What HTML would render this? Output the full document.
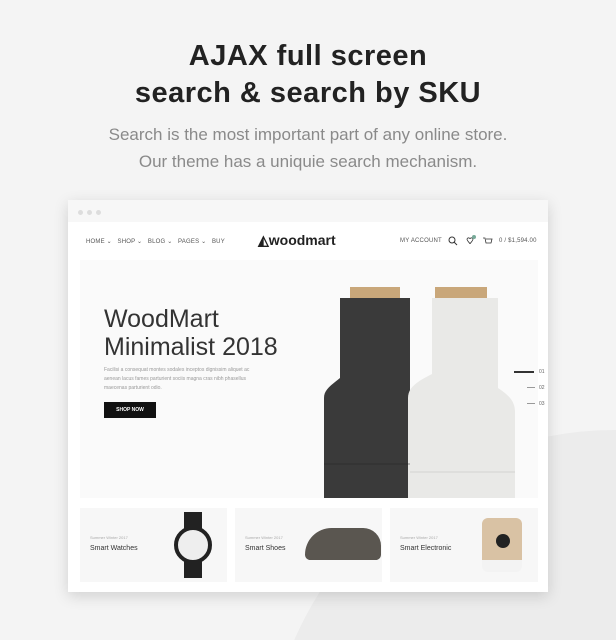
<!DOCTYPE html>
<html><head><style>
*{margin:0;padding:0;box-sizing:border-box}
html,body{width:616px;height:640px;overflow:hidden}
body{background:#f4f4f4;font-family:"Liberation Sans",sans-serif;position:relative}
.circ{position:absolute;left:265px;top:430px;width:700px;height:700px;border-radius:50%;background:#ececec}
h1{position:absolute;top:38px;left:0;width:616px;text-align:center;font-size:29px;line-height:37px;color:#222;font-weight:bold;letter-spacing:0.5px}
.sub{position:absolute;top:121px;left:0;width:616px;text-align:center;font-size:17px;line-height:27px;color:#8a8a8a}
.win{position:absolute;left:68px;top:200px;width:480px;height:392px;background:#fff;box-shadow:0 4px 14px rgba(0,0,0,.15)}
.bar{height:22px;background:#f7f7f7}
.dot{position:absolute;top:10px;width:5px;height:5px;border-radius:50%;background:#ddd}
.nav{position:absolute;top:38px;font-size:6px;color:#555;letter-spacing:.2px}
.logo{position:absolute;left:190px;top:32px;font-size:14px;font-weight:bold;color:#222}
.hero{position:absolute;left:12px;top:60px;width:458px;height:238px;background:#fafafa;overflow:hidden}
.ht{position:absolute;left:24px;top:45px;font-size:25px;line-height:28px;color:#333;font-weight:300}
.hp{position:absolute;left:24px;top:106px;font-size:5px;line-height:9px;color:#999;width:160px}
.btn{position:absolute;left:24px;top:142px;width:52px;height:16px;background:#111;color:#fff;font-size:5px;font-weight:bold;text-align:center;line-height:16px}
.card{position:absolute;top:308px;height:74px;background:#f7f7f7}
.cs{position:absolute;left:10px;top:27px;font-size:4px;color:#aaa}
.cn{position:absolute;left:10px;top:37px;font-size:7px;color:#333}
.sl{position:absolute;font-size:5px;color:#666}
</style></head><body>
<div class="circ"></div>
<h1>AJAX full screen<br>search &amp; search by SKU</h1>
<div class="sub">Search is the most important part of any online store.<br>Our theme has a uniquie search mechanism.</div>
<div class="win">
<div class="bar"></div>
<div class="dot" style="left:10px"></div><div class="dot" style="left:19px"></div><div class="dot" style="left:28px"></div>
<div class="nav" style="left:18px">HOME ⌄ &nbsp; SHOP ⌄ &nbsp; BLOG ⌄ &nbsp; PAGES ⌄ &nbsp; BUY</div>
<div class="logo">◭woodmart</div>
<div class="nav" style="left:332px">MY ACCOUNT</div>
<svg style="position:absolute;left:380px;top:35px" width="60" height="12"><circle cx="4" cy="5" r="3" fill="none" stroke="#333" stroke-width="1"/><line x1="6" y1="7" x2="9" y2="10" stroke="#333"/><path d="M19 4c1-2 3-1 3 0c0-1 2-2 3 0c0 2-3 4-3 5c0-1-3-3-3-5z" fill="none" stroke="#333" stroke-width=".8"/><circle cx="26" cy="2" r="2" fill="#7a9"/><path d="M35 3h2l1 5h5l1-4h-6" fill="none" stroke="#333" stroke-width=".8"/></svg>
<div class="nav" style="left:431px">0 / $1,594.00</div>
<div class="hero">
<div class="ht">WoodMart<br>Minimalist 2018</div>
<div class="hp">Facilisi a consequat montes sodales inceptos dignissim aliquet ac aenean lacus fames parturient sociis magna cras nibh phasellus maecenas parturient odio.</div>
<div class="btn">SHOP NOW</div>
<svg style="position:absolute;left:0;top:0" width="458" height="238">
<rect x="270" y="27" width="50" height="12" fill="#c9a77a"/>
<rect x="355" y="27" width="52" height="12" fill="#c9a77a"/>
<path d="M260 38h70v200h-86v-100c0-8 6-12 16-20z" fill="#3a3a3a"/>
<path d="M352 38h66v90c12 8 17 14 17 24v86h-107v-100c0-10 8-16 24-24z" fill="#e9e9e7"/>
<line x1="244" y1="204" x2="330" y2="204" stroke="#222" stroke-width=".6"/>
<line x1="330" y1="212" x2="435" y2="212" stroke="#bbb" stroke-width=".6"/>
</svg>
</div>
<div style="position:absolute;left:446px;top:171px;width:20px;height:1.5px;background:#333"></div><div class="sl" style="left:471px;top:169px">01</div>
<div style="position:absolute;left:459px;top:187px;width:8px;height:1px;background:#999"></div><div class="sl" style="left:471px;top:185px">02</div>
<div style="position:absolute;left:459px;top:203px;width:8px;height:1px;background:#999"></div><div class="sl" style="left:471px;top:201px">03</div>
<div class="card" style="left:12px;width:147px"><div class="cs">Summer Winter 2017</div><div class="cn">Smart Watches</div>
<div style="position:absolute;left:104px;top:4px;width:18px;height:66px;background:#222"></div><div style="position:absolute;left:94px;top:18px;width:38px;height:38px;border-radius:50%;background:#eee;border:4px solid #222"></div></div>
<div class="card" style="left:167px;width:147px"><div class="cs">Summer Winter 2017</div><div class="cn">Smart Shoes</div>
<div style="position:absolute;left:70px;top:20px;width:76px;height:32px;background:#5a5650;border-radius:30px 20px 6px 6px"></div></div>
<div class="card" style="left:322px;width:148px"><div class="cs">Summer Winter 2017</div><div class="cn">Smart Electronic</div>
<div style="position:absolute;left:92px;top:10px;width:40px;height:54px;background:#d9c2a4;border-radius:6px;border-bottom:12px solid #f3f3f3"></div><div style="position:absolute;left:106px;top:26px;width:14px;height:14px;border-radius:50%;background:#222"></div></div>
</div>
</body></html>
